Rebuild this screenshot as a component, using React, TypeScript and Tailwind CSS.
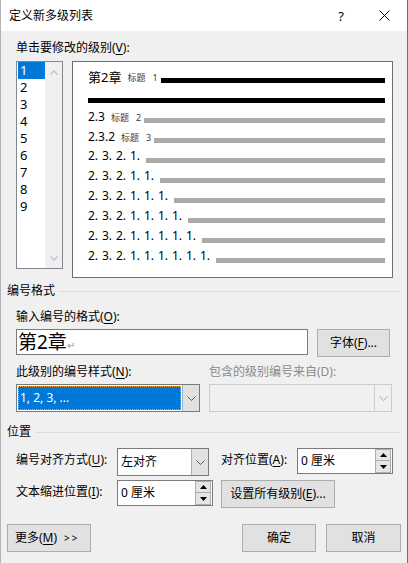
import type { ReactNode } from "react";

const levels = ["1", "2", "3", "4", "5", "6", "7", "8", "9"];

// numbered preview rows below the "2.3.2" heading: 4 to 9 groups
const deepRows = [4, 5, 6, 7, 8, 9];
const groupDigits = ["2.", "3.", "2.", "1.", "1.", "1.", "1.", "1.", "1."];

function Key({ children }: { children: ReactNode }) {
  return <span className="underline underline-offset-[2px]">{children}</span>;
}

function Chevron({ muted }: { muted?: boolean }) {
  return (
    <svg
      width="9"
      height="5"
      viewBox="0 0 9 5"
      className={muted ? "text-[#a6a6a6]" : "text-[#5a5a5a]"}
    >
      <path d="M0.5 0.5 L4.5 4.5 L8.5 0.5" fill="none" stroke="currentColor" strokeWidth="1" />
    </svg>
  );
}

function ScrollChevron({ up }: { up?: boolean }) {
  return (
    <svg width="8" height="5" viewBox="0 0 8 5" className="text-[#c2c2c2]">
      <path
        d={up ? "M0.5 4.5 L4 1 L7.5 4.5" : "M0.5 0.5 L4 4 L7.5 0.5"}
        fill="none"
        stroke="currentColor"
        strokeWidth="1.3"
      />
    </svg>
  );
}

function Triangle({ up }: { up?: boolean }) {
  return (
    <svg width="7" height="4" viewBox="0 0 7 4">
      <path d={up ? "M0 4 L3.5 0 L7 4 Z" : "M0 0 L3.5 4 L7 0 Z"} fill="#000" />
    </svg>
  );
}

function PushButton({ className, children }: { className: string; children: ReactNode }) {
  return (
    <button
      type="button"
      className={`flex h-[28px] items-center justify-center border border-[#adadad] bg-[#e1e1e1] text-[12px] leading-none ${className}`}
    >
      {children}
    </button>
  );
}

function Spinner({ className, value }: { className: string; value: string }) {
  return (
    <div className={`flex h-[26px] w-[96px] border border-[#7a7a7a] bg-white ${className}`}>
      <div className="flex-1 pl-[3px] text-[12px] leading-[24px]">{value}</div>
      <div className="flex flex-col pr-[1px]">
        <div className="flex h-[12px] w-[16px] items-center justify-center border border-[#adadad] bg-[#e5e5e5]">
          <Triangle up />
        </div>
        <div className="flex h-[12px] w-[16px] items-center justify-center border border-t-0 border-[#adadad] bg-[#e5e5e5]">
          <Triangle />
        </div>
      </div>
    </div>
  );
}

function SectionTitle({ children, className }: { children: ReactNode; className: string }) {
  return (
    <div className={`flex items-center leading-[16px] ${className}`}>
      <span>{children}</span>
      <div className="ml-[4px] h-px flex-1 bg-[#dcdcdc]" />
    </div>
  );
}

function HeadingTag({ n }: { n: number }) {
  return (
    <span className="ml-[6px] mt-[4px] text-[9px] leading-[12px] text-[#3a3a3a]">
      标题<span className="ml-[7px]">{n}</span>
    </span>
  );
}

function Preview() {
  return (
    <div className="ml-[9px] flex h-[217px] w-[321px] flex-col border border-[#6e6e6e] bg-white pl-[15px] pr-[7px] pt-[6px]">
      <div className="flex h-[20px] items-start">
        <span className="mt-[1px] text-[13px] leading-[16px]">第2章</span>
        <HeadingTag n={1} />
        <div className="ml-[3px] mt-[10px] h-[5px] flex-1 bg-black" />
      </div>
      <div className="flex h-[20px] items-start">
        <div className="mt-[10px] h-[5px] flex-1 bg-black" />
      </div>
      <div className="flex h-[20px] items-start">
        <span className="mt-[2px] text-[12px] leading-[14px]">2.3</span>
        <HeadingTag n={2} />
        <div className="ml-[3px] mt-[10px] h-[5px] flex-1 bg-[#aaaaaa]" />
      </div>
      <div className="flex h-[20px] items-start">
        <span className="mt-[2px] text-[12px] leading-[14px]">2.3.2</span>
        <HeadingTag n={3} />
        <div className="ml-[3px] mt-[10px] h-[5px] flex-1 bg-[#aaaaaa]" />
      </div>
      {deepRows.map((count) => (
        <div key={count} className="flex h-[20px] items-start">
          <span className="mt-[1px] flex text-[12px] leading-[14px]">
            {groupDigits.slice(0, count).map((g, i) => (
              <span key={i} className="w-[14px]">
                {g}
              </span>
            ))}
          </span>
          <div className="ml-[2px] mt-[10px] h-[5px] flex-1 bg-[#aaaaaa]" />
        </div>
      ))}
    </div>
  );
}

function LevelList() {
  return (
    <div className="ml-[9px] flex h-[208px] w-[47px] border border-[#828790] bg-white">
      <div className="flex-1 pl-[1px]">
        {levels.map((lv, i) => (
          <div
            key={lv}
            className={`h-[17px] pl-[2px] text-[13px] leading-[17px] ${
              i === 0 ? "bg-[#0078d7] text-white" : "text-black"
            }`}
          >
            {lv}
          </div>
        ))}
      </div>
      <div className="flex w-[17px] flex-col items-center justify-between bg-[#f0f0f0] pb-[7px] pt-[8px]">
        <ScrollChevron up />
        <ScrollChevron />
      </div>
    </div>
  );
}

export default function App() {
  return (
    <div className="h-[563px] w-[408px] overflow-hidden border-x border-l-[#b4b4b4] border-r-[#6f6f6f] bg-[#f0f0f0] font-['Noto_Sans','Noto_Sans_CJK_SC',sans-serif] text-[12px] text-black">
      {/* title bar */}
      <div className="flex h-[31px] items-center bg-white pl-[8px]">
        <span className="text-[12px] leading-[16px]">定义新多级列表</span>
        <span className="ml-auto mr-[35px] text-[13px] leading-[16px]">?</span>
        <svg width="11" height="11" viewBox="0 0 11 11" className="mr-[17px]">
          <path d="M0.5 0.5 L10.5 10.5 M10.5 0.5 L0.5 10.5" stroke="#000" strokeWidth="1" />
        </svg>
      </div>

      <div className="flex flex-col px-[6px] pt-[9px]">
        <div className="pl-[9px] leading-[16px]">
          单击要修改的级别(<Key>V</Key>):
        </div>
        <div className="mt-[5px] flex items-start">
          <LevelList />
          <Preview />
        </div>

        <SectionTitle className="mt-[5px]">编号格式</SectionTitle>
        <div className="mt-[10px] pl-[9px] leading-[16px]">
          输入编号的格式(<Key>O</Key>):
        </div>
        <div className="mt-[4px] flex items-start pl-[9px]">
          <div className="flex h-[26px] w-[292px] items-center border border-[#7a7a7a] bg-white pl-[1px]">
            <span className="text-[19px] leading-[24px]">第2章</span>
            <span className="mt-[6px] text-[10px] text-[#9a9a9a]">↵</span>
          </div>
          <PushButton className="ml-[9px] w-[73px]">
            字体(<Key>F</Key>)...
          </PushButton>
        </div>

        <div className="mt-[7px] flex pl-[9px] leading-[16px]">
          <div className="w-[193px]">
            此级别的编号样式(<Key>N</Key>):
          </div>
          <div className="text-[#8a8a8a]">包含的级别编号来自(D):</div>
        </div>
        <div className="mt-[4px] flex pl-[9px]">
          <div className="flex h-[28px] w-[184px] border border-[#7a7a7a] bg-white">
            <div className="flex flex-1 p-[1px]">
              <div className="flex-1 border border-dotted border-[#f0a030] bg-[#0078d7] pl-[1px] text-[12px] leading-[22px] text-white">
                1, 2, 3, ...
              </div>
            </div>
            <div className="flex w-[17px] items-center justify-center border-l border-[#acacac] bg-[#e1e1e1]">
              <Chevron />
            </div>
          </div>
          <div className="ml-[9px] flex h-[28px] w-[183px] border border-[#cccccc] bg-[#f0f0f0]">
            <div className="flex-1" />
            <div className="flex w-[17px] items-center justify-center border-l border-[#cccccc]">
              <Chevron muted />
            </div>
          </div>
        </div>

        <SectionTitle className="mt-[12px]">位置</SectionTitle>
        <div className="mt-[8px] flex items-start pl-[9px]">
          <div className="mt-[4px] w-[101px] leading-[16px]">
            编号对齐方式(<Key>U</Key>):
          </div>
          <div className="flex h-[28px] w-[92px] border border-[#7a7a7a] bg-white">
            <div className="flex-1 pl-[3px] text-[12px] leading-[26px]">左对齐</div>
            <div className="flex w-[17px] items-center justify-center border-l border-[#acacac] bg-[#e1e1e1]">
              <Chevron />
            </div>
          </div>
          <div className="ml-[12px] mt-[4px] w-[76px] leading-[16px]">
            对齐位置(<Key>A</Key>):
          </div>
          <Spinner className="" value="0 厘米" />
        </div>
        <div className="mt-[4px] flex items-start pl-[9px]">
          <div className="mt-[4px] w-[101px] leading-[16px]">
            文本缩进位置(<Key>I</Key>):
          </div>
          <Spinner className="" value="0 厘米" />
          <PushButton className="ml-[8px] w-[114px]">
            设置所有级别(<Key>E</Key>)...
          </PushButton>
        </div>

        <div className="mt-[16px] flex items-start justify-between">
          <PushButton className="w-[84px] justify-start pl-[7px]">
            更多(<Key>M</Key>)<span className="ml-[7px] text-[10px] tracking-[2px]">&gt;&gt;</span>
          </PushButton>
          <div className="flex gap-[10px]">
            <PushButton className="w-[74px]">确定</PushButton>
            <PushButton className="w-[75px]">取消</PushButton>
          </div>
        </div>
      </div>
    </div>
  );
}
